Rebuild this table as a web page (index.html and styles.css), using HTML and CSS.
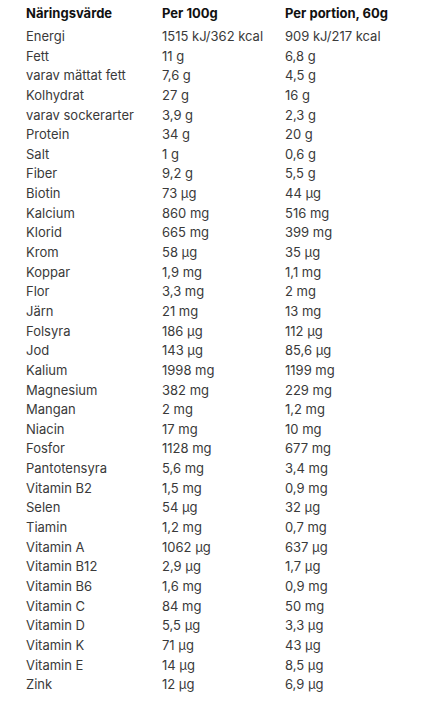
FILE: index.html
```
<!DOCTYPE html>
<html lang="sv">
<head>
<meta charset="utf-8">
<link rel="stylesheet" href="styles.css">
</head>
<body>
<table class="nutrition">
<thead>
<tr><th>Näringsvärde</th><th>Per 100g</th><th>Per portion, 60g</th></tr>
</thead>
<tbody>
<tr><td>Energi</td><td>1515 kJ/362 kcal</td><td>909 kJ/217 kcal</td></tr>
<tr><td>Fett</td><td>11 g</td><td>6,8 g</td></tr>
<tr><td>varav mättat fett</td><td>7,6 g</td><td>4,5 g</td></tr>
<tr><td>Kolhydrat</td><td>27 g</td><td>16 g</td></tr>
<tr><td>varav sockerarter</td><td>3,9 g</td><td>2,3 g</td></tr>
<tr><td>Protein</td><td>34 g</td><td>20 g</td></tr>
<tr><td>Salt</td><td>1 g</td><td>0,6 g</td></tr>
<tr><td>Fiber</td><td>9,2 g</td><td>5,5 g</td></tr>
<tr><td>Biotin</td><td>73 µg</td><td>44 µg</td></tr>
<tr><td>Kalcium</td><td>860 mg</td><td>516 mg</td></tr>
<tr><td>Klorid</td><td>665 mg</td><td>399 mg</td></tr>
<tr><td>Krom</td><td>58 µg</td><td>35 µg</td></tr>
<tr><td>Koppar</td><td>1,9 mg</td><td>1,1 mg</td></tr>
<tr><td>Flor</td><td>3,3 mg</td><td>2 mg</td></tr>
<tr><td>Järn</td><td>21 mg</td><td>13 mg</td></tr>
<tr><td>Folsyra</td><td>186 µg</td><td>112 µg</td></tr>
<tr><td>Jod</td><td>143 µg</td><td>85,6 µg</td></tr>
<tr><td>Kalium</td><td>1998 mg</td><td>1199 mg</td></tr>
<tr><td>Magnesium</td><td>382 mg</td><td>229 mg</td></tr>
<tr><td>Mangan</td><td>2 mg</td><td>1,2 mg</td></tr>
<tr><td>Niacin</td><td>17 mg</td><td>10 mg</td></tr>
<tr><td>Fosfor</td><td>1128 mg</td><td>677 mg</td></tr>
<tr><td>Pantotensyra</td><td>5,6 mg</td><td>3,4 mg</td></tr>
<tr><td>Vitamin B2</td><td>1,5 mg</td><td>0,9 mg</td></tr>
<tr><td>Selen</td><td>54 µg</td><td>32 µg</td></tr>
<tr><td>Tiamin</td><td>1,2 mg</td><td>0,7 mg</td></tr>
<tr><td>Vitamin A</td><td>1062 µg</td><td>637 µg</td></tr>
<tr><td>Vitamin B12</td><td>2,9 µg</td><td>1,7 µg</td></tr>
<tr><td>Vitamin B6</td><td>1,6 mg</td><td>0,9 mg</td></tr>
<tr><td>Vitamin C</td><td>84 mg</td><td>50 mg</td></tr>
<tr><td>Vitamin D</td><td>5,5 µg</td><td>3,3 µg</td></tr>
<tr><td>Vitamin K</td><td>71 µg</td><td>43 µg</td></tr>
<tr><td>Vitamin E</td><td>14 µg</td><td>8,5 µg</td></tr>
<tr><td>Zink</td><td>12 µg</td><td>6,9 µg</td></tr>
</tbody>
</table>
</body>
</html>
```

FILE: styles.css
```
html, body {
  margin: 0;
  padding: 0;
  background: #ffffff;
}
body {
  font-family: Inter, "Noto Sans", sans-serif;
  font-size: 13px;
  color: #3a3a3a;
}
.nutrition {
  border-collapse: collapse;
  margin-left: 26px;
  table-layout: fixed;
}
.nutrition th,
.nutrition td {
  padding: 0;
  text-align: left;
  white-space: nowrap;
  vertical-align: middle;
}
.nutrition th {
  font-weight: 700;
  color: #111111;
  height: 23px;
  padding-top: 1px;
  padding-bottom: 3px;
}
.nutrition td {
  height: 19.64px;
  line-height: 19.64px;
}
.nutrition th:nth-child(1),
.nutrition td:nth-child(1) { width: 136px; }
.nutrition th:nth-child(2),
.nutrition td:nth-child(2) { width: 123px; }
```
